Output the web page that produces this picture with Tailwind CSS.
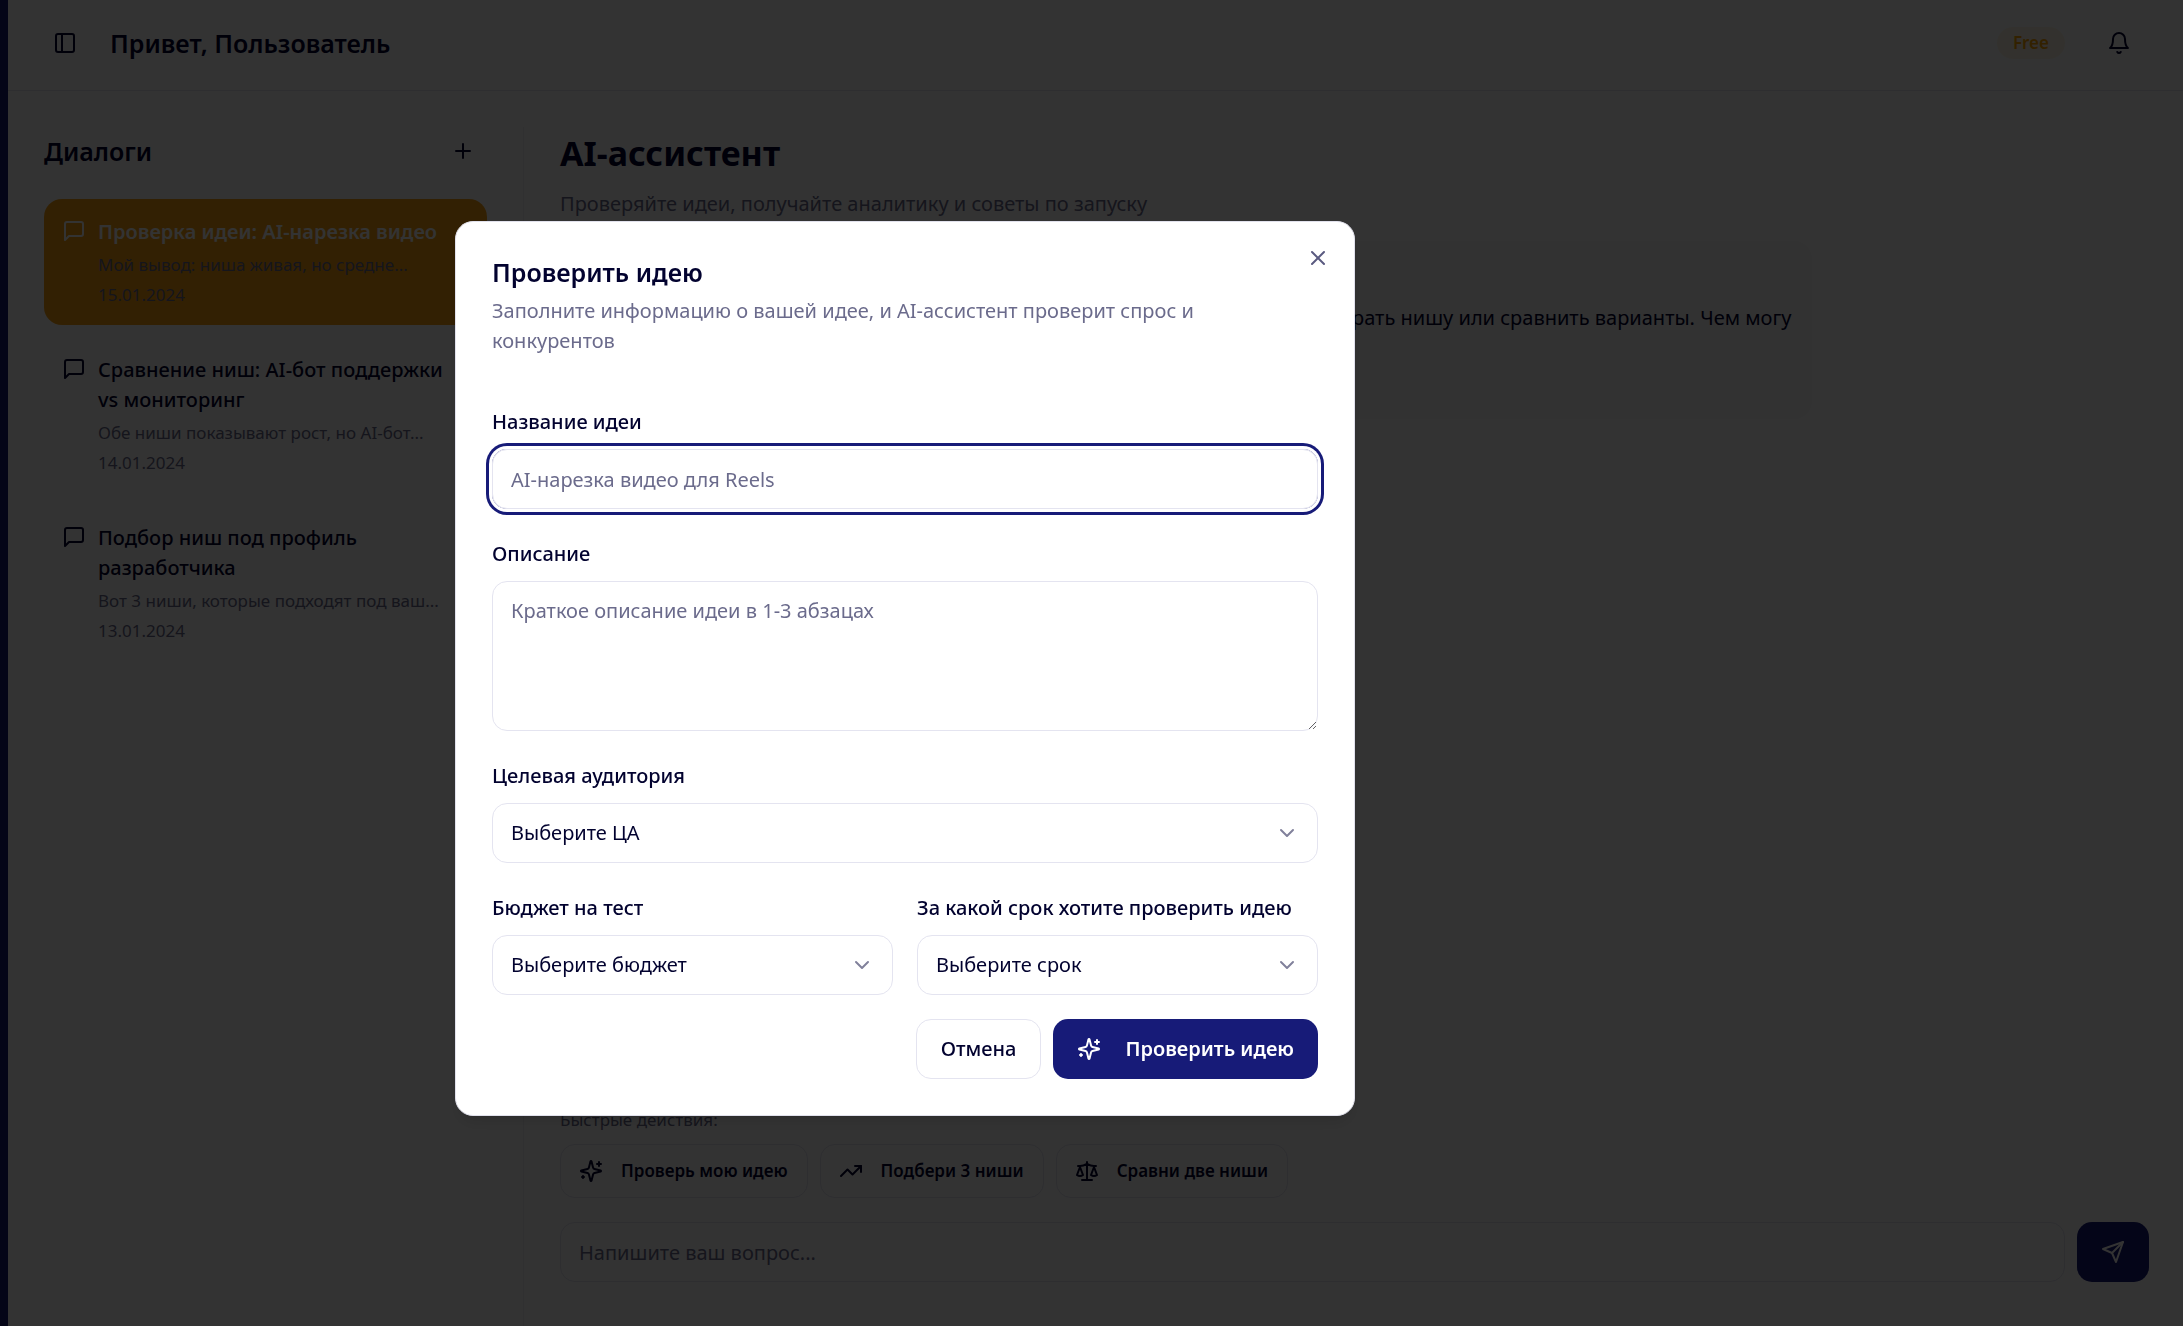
<!DOCTYPE html>
<html lang="ru">
<head>
<meta charset="utf-8">
<meta name="viewport" content="width=device-width, initial-scale=1">
<title>AI-ассистент</title>
<script src="https://cdn.jsdelivr.net/npm/@tailwindcss/browser@4"></script>
</head>
<body class="h-screen overflow-hidden bg-white font-['Noto_Sans','Open_Sans',sans-serif] text-[20px] leading-[30px] text-[#02022f]">

<svg class="hidden" aria-hidden="true">
  <symbol id="message" viewBox="0 0 24 24"><path d="M21 15a2 2 0 0 1-2 2H7l-4 4V5a2 2 0 0 1 2-2h14a2 2 0 0 1 2 2z"/></symbol>
  <symbol id="sparkles" viewBox="0 0 24 24"><path d="M9.937 15.5A2 2 0 0 0 8.5 14.063l-6.135-1.582a.5.5 0 0 1 0-.962L8.5 9.936A2 2 0 0 0 9.937 8.5l1.582-6.135a.5.5 0 0 1 .963 0L14.063 8.5A2 2 0 0 0 15.5 9.937l6.135 1.581a.5.5 0 0 1 0 .964L15.5 14.063a2 2 0 0 0-1.437 1.437l-1.582 6.135a.5.5 0 0 1-.963 0z"/><path d="M20 3v4M22 5h-4M4 17v2M5 18H3"/></symbol>
  <symbol id="chevron" viewBox="0 0 24 24"><path d="m6 9 6 6 6-6"/></symbol>
</svg>

<div class="flex h-full">
  <aside class="w-2 shrink-0 bg-[#151a75]"></aside>

  <div class="flex min-w-0 flex-1 flex-col">
    <header class="flex h-[91px] shrink-0 items-center border-b border-[#e4e4f0] pr-[34px] pb-1 pl-9">
      <button type="button" aria-label="Свернуть меню" class="grid size-[42px] place-items-center">
        <svg class="size-6" viewBox="0 0 24 24" fill="none" stroke="currentColor" stroke-width="2" stroke-linecap="round" stroke-linejoin="round"><rect width="18" height="18" x="3" y="3" rx="2"/><path d="M9 3v18"/></svg>
      </button>
      <p class="ml-6 text-[25px] font-semibold">Привет, Пользователь</p>
      <div class="ml-auto flex items-center gap-6">
        <span class="rounded-full bg-[#ffa500]/10 px-4 py-1 text-[17px] leading-6 font-semibold text-[#ffa500]">Free</span>
        <button type="button" aria-label="Уведомления" class="grid size-[60px] place-items-center">
          <svg class="size-6" viewBox="0 0 24 24" fill="none" stroke="currentColor" stroke-width="2" stroke-linecap="round" stroke-linejoin="round"><path d="M6 8a6 6 0 0 1 12 0c0 7 3 9 3 9H3s3-2 3-9"/><path d="M10.3 21a1.94 1.94 0 0 0 3.4 0"/></svg>
        </button>
      </div>
    </header>

    <div class="flex min-h-0 flex-1 pt-9">
      <nav aria-label="Диалоги" class="w-[516px] shrink-0 border-r border-[#ededf5] pr-9 pl-9">
        <div class="mb-6 flex h-12 items-center justify-between">
          <h2 class="text-[25px] font-semibold">Диалоги</h2>
          <button type="button" aria-label="Новый диалог" class="grid size-12 place-items-center">
            <svg class="size-6" viewBox="0 0 24 24" fill="none" stroke="currentColor" stroke-width="2" stroke-linecap="round" stroke-linejoin="round"><path d="M5 12h14M12 5v14"/></svg>
          </button>
        </div>
        <ul class="flex flex-col gap-3">
          <li>
            <a href="#" class="flex gap-3 rounded-[18px] bg-[#f7a012] py-[18px] pr-9 pl-[18px] text-white">
              <svg class="mt-0.5 size-6 shrink-0" fill="none" stroke="currentColor" stroke-width="2" stroke-linecap="round" stroke-linejoin="round"><use href="#message"/></svg>
              <span class="min-w-0 flex-1">
                <span class="block font-semibold">Проверка идеи: AI-нарезка видео</span>
                <span class="mt-1.5 block text-[17px] leading-6 text-[#6b6b8c]">Мой вывод: ниша живая, но средне...</span>
                <span class="mt-1.5 block text-[17px] leading-6 text-[#6b6b8c]">15.01.2024</span>
              </span>
            </a>
          </li>
          <li>
            <a href="#" class="flex gap-3 rounded-[18px] py-[18px] pr-9 pl-[18px]">
              <svg class="mt-0.5 size-6 shrink-0" fill="none" stroke="currentColor" stroke-width="2" stroke-linecap="round" stroke-linejoin="round"><use href="#message"/></svg>
              <span class="min-w-0 flex-1">
                <span class="block font-medium">Сравнение ниш: AI-бот поддержки vs мониторинг</span>
                <span class="mt-1.5 block text-[17px] leading-6 text-[#6b6b8c]">Обе ниши показывают рост, но AI-бот...</span>
                <span class="mt-1.5 block text-[17px] leading-6 text-[#6b6b8c]">14.01.2024</span>
              </span>
            </a>
          </li>
          <li>
            <a href="#" class="flex gap-3 rounded-[18px] py-[18px] pr-9 pl-[18px]">
              <svg class="mt-0.5 size-6 shrink-0" fill="none" stroke="currentColor" stroke-width="2" stroke-linecap="round" stroke-linejoin="round"><use href="#message"/></svg>
              <span class="min-w-0 flex-1">
                <span class="block font-medium">Подбор ниш под профиль разработчика</span>
                <span class="mt-1.5 block text-[17px] leading-6 text-[#6b6b8c]">Вот 3 ниши, которые подходят под ваш...</span>
                <span class="mt-1.5 block text-[17px] leading-6 text-[#6b6b8c]">13.01.2024</span>
              </span>
            </a>
          </li>
        </ul>
      </nav>

      <main class="flex min-w-0 flex-1 flex-col pr-[34px] pb-11 pl-9">
        <h1 class="text-[34px] leading-[52px] font-bold">AI-ассистент</h1>
        <p class="mt-2.5 text-[#6b6b8c]">Проверяйте идеи, получайте аналитику и советы по запуску</p>

        <div class="mt-[22px] flex-1 pr-6">
          <div class="w-4/5 rounded-[18px] bg-[#f7f7fa] py-6 pr-3 pl-5">
            <p>Привет!</p>
            <p class="mt-2">Я ваш AI-ассистент по запуску продуктов. Могу помочь проверить идею, подобрать нишу или сравнить варианты. Чем могу помочь?</p>
            <p class="mt-2 text-[17px] leading-6 text-[#6b6b8c]">10:00</p>
          </div>
        </div>

        <p class="mb-3 text-[17px] leading-6 text-[#6b6b8c]">Быстрые действия:</p>
        <div class="mb-6 flex gap-3">
          <button type="button" class="flex h-[54px] items-center gap-[18px] rounded-[15px] border border-[#e4e4f0] pr-[19px] pl-[18px] text-[17px] font-semibold">
            <svg class="size-6" fill="none" stroke="currentColor" stroke-width="2" stroke-linecap="round" stroke-linejoin="round"><use href="#sparkles"/></svg>
            Проверь мою идею
          </button>
          <button type="button" class="flex h-[54px] items-center gap-[18px] rounded-[15px] border border-[#e4e4f0] pr-[19px] pl-[18px] text-[17px] font-semibold">
            <svg class="size-6" viewBox="0 0 24 24" fill="none" stroke="currentColor" stroke-width="2" stroke-linecap="round" stroke-linejoin="round"><path d="m22 7-8.5 8.5-5-5L2 17"/><path d="M16 7h6v6"/></svg>
            Подбери 3 ниши
          </button>
          <button type="button" class="flex h-[54px] items-center gap-[18px] rounded-[15px] border border-[#e4e4f0] pr-[19px] pl-[18px] text-[17px] font-semibold">
            <svg class="size-6" viewBox="0 0 24 24" fill="none" stroke="currentColor" stroke-width="2" stroke-linecap="round" stroke-linejoin="round"><path d="m16 16 3-8 3 8c-.87.65-1.92 1-3 1s-2.13-.35-3-1Z"/><path d="m2 16 3-8 3 8c-.87.65-1.92 1-3 1s-2.13-.35-3-1Z"/><path d="M7 21h10M12 3v18M3 7h2c2 0 5-1 7-2 2 1 5 2 7 2h2"/></svg>
            Сравни две ниши
          </button>
        </div>
        <form class="flex gap-3">
          <input type="text" aria-label="Ваш вопрос" placeholder="Напишите ваш вопрос..." class="h-[60px] min-w-0 flex-1 rounded-[15px] border border-[#e4e4f0] px-[18px] placeholder:text-[#6b6b8c]">
          <button type="button" aria-label="Отправить" class="grid h-[60px] w-[72px] place-items-center rounded-[15px] bg-[#171b78] text-white">
            <svg class="size-6" viewBox="0 0 24 24" fill="none" stroke="currentColor" stroke-width="2" stroke-linecap="round" stroke-linejoin="round"><path d="m22 2-7 20-4-9-9-4Z"/><path d="M22 2 11 13"/></svg>
          </button>
        </form>
      </main>
    </div>
  </div>
</div>

<div class="fixed inset-0 bg-black/80"></div>

<div role="dialog" aria-modal="true" aria-labelledby="dialog-title" class="fixed top-[221px] left-[455px] w-[900px] rounded-[18px] border border-[#e1e1ec] bg-white p-9 shadow-lg">
  <button type="button" aria-label="Закрыть" class="absolute top-6 right-6 text-[#5a5a80]">
    <svg class="size-6" viewBox="0 0 24 24" fill="none" stroke="currentColor" stroke-width="2" stroke-linecap="round" stroke-linejoin="round"><path d="M18 6 6 18M6 6l12 12"/></svg>
  </button>
  <h2 id="dialog-title" class="text-[25px] leading-7 font-semibold">Проверить идею</h2>
  <p class="mt-2.5 pr-12 text-[#6b6b8c]">Заполните информацию о вашей идее, и AI-ассистент проверит спрос и конкурентов</p>

  <form class="mt-[51px]">
    <div class="flex flex-col gap-[30px]">
      <div class="flex flex-col gap-3">
        <label for="name" class="font-medium">Название идеи</label>
        <input id="name" type="text" placeholder="AI-нарезка видео для Reels" class="h-[60px] w-full rounded-[15px] border border-[#e4e4f0] px-[18px] ring-3 ring-[#171b78] ring-offset-3 outline-none placeholder:text-[#6b6b8c]">
      </div>
      <div class="flex flex-col gap-3">
        <label for="about" class="font-medium">Описание</label>
        <textarea id="about" placeholder="Краткое описание идеи в 1-3 абзацах" class="h-[150px] w-full rounded-[15px] border border-[#e4e4f0] px-[18px] py-3.5 placeholder:text-[#6b6b8c]"></textarea>
      </div>
      <div class="flex flex-col gap-3">
        <label for="audience" class="font-medium">Целевая аудитория</label>
        <div class="relative">
          <select id="audience" class="h-[60px] w-full appearance-none rounded-[15px] border border-[#e4e4f0] bg-white px-[18px]"><option>Выберите ЦА</option></select>
          <svg class="pointer-events-none absolute top-[18px] right-[19px] size-6 text-[#81819b]" fill="none" stroke="currentColor" stroke-width="2" stroke-linecap="round" stroke-linejoin="round"><use href="#chevron"/></svg>
        </div>
      </div>
      <div class="grid grid-cols-2 gap-6">
        <div class="flex flex-col gap-3">
          <label for="budget" class="font-medium">Бюджет на тест</label>
          <div class="relative">
            <select id="budget" class="h-[60px] w-full appearance-none rounded-[15px] border border-[#e4e4f0] bg-white px-[18px]"><option>Выберите бюджет</option></select>
            <svg class="pointer-events-none absolute top-[18px] right-[19px] size-6 text-[#81819b]" fill="none" stroke="currentColor" stroke-width="2" stroke-linecap="round" stroke-linejoin="round"><use href="#chevron"/></svg>
          </div>
        </div>
        <div class="flex flex-col gap-3">
          <label for="term" class="font-medium">За какой срок хотите проверить идею</label>
          <div class="relative">
            <select id="term" class="h-[60px] w-full appearance-none rounded-[15px] border border-[#e4e4f0] bg-white px-[18px]"><option>Выберите срок</option></select>
            <svg class="pointer-events-none absolute top-[18px] right-[19px] size-6 text-[#81819b]" fill="none" stroke="currentColor" stroke-width="2" stroke-linecap="round" stroke-linejoin="round"><use href="#chevron"/></svg>
          </div>
        </div>
      </div>
    </div>
    <div class="mt-6 flex justify-end gap-3">
      <button type="button" class="h-[60px] rounded-[15px] border border-[#e4e4f0] px-6 font-medium">Отмена</button>
      <button type="submit" class="flex h-[60px] items-center gap-6 rounded-[15px] bg-[#171b78] px-6 font-semibold text-white">
        <svg class="size-6" fill="none" stroke="currentColor" stroke-width="2" stroke-linecap="round" stroke-linejoin="round"><use href="#sparkles"/></svg>
        Проверить идею
      </button>
    </div>
  </form>
</div>
</body>
</html>
